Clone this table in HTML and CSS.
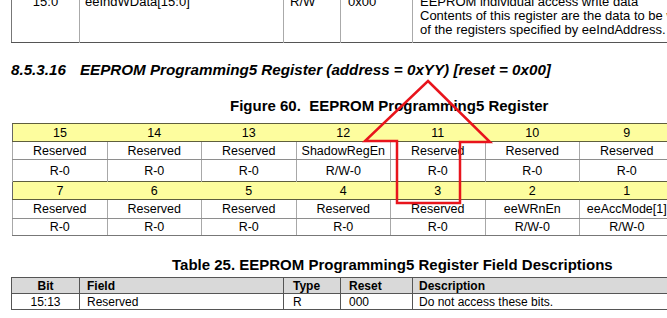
FILE: index.html
```html
<!DOCTYPE html>
<html>
<head>
<title>EEPROM Programming5 Register</title>
<link rel="stylesheet" href="styles.css">
</head>
<body>
<div class="page">
  <table class="prevTable">
    <tr>
      <td class="c1 center">15:0</td>
      <td class="c2">eeIndWData[15:0]</td>
      <td class="c3">R/W</td>
      <td class="c4">0x00</td>
      <td class="c5">EEPROM individual access write data<br>Contents of this register are the data to be written into one<br>of the registers specified by eeIndAddress.</td>
    </tr>
  </table>

  <h3 class="section"><span class="secNum">8.5.3.16</span>EEPROM Programming5 Register (address = 0xYY) [reset = 0x00]</h3>

  <div class="caption">Figure 60.&nbsp; EEPROM Programming5 Register</div>

  <table class="regTable">
    <tr class="bits">
      <td>15</td><td>14</td><td>13</td><td>12</td><td>11</td><td>10</td><td>9</td><td>8</td>
    </tr>
    <tr class="names rowA">
      <td>Reserved</td><td>Reserved</td><td>Reserved</td><td>ShadowRegEn</td><td>Reserved</td><td>Reserved</td><td>Reserved</td><td>Reserved</td>
    </tr>
    <tr class="access rowB">
      <td>R-0</td><td>R-0</td><td>R-0</td><td>R/W-0</td><td>R-0</td><td>R-0</td><td>R-0</td><td>R-0</td>
    </tr>
    <tr class="bits">
      <td>7</td><td>6</td><td>5</td><td>4</td><td>3</td><td>2</td><td>1</td><td>0</td>
    </tr>
    <tr class="names rowC">
      <td>Reserved</td><td>Reserved</td><td>Reserved</td><td>Reserved</td><td>Reserved</td><td>eeWRnEn</td><td>eeAccMode[1]</td><td>eeAccMode[0]</td>
    </tr>
    <tr class="access rowD">
      <td>R-0</td><td>R-0</td><td>R-0</td><td>R-0</td><td>R-0</td><td>R/W-0</td><td>R/W-0</td><td>R/W-0</td>
    </tr>
  </table>

  <div class="tableTitle">Table 25. EEPROM Programming5 Register Field Descriptions</div>

  <table class="fieldTable">
    <tr class="head">
      <td class="c1 center">Bit</td>
      <td class="c2">Field</td>
      <td class="c3">Type</td>
      <td class="c4">Reset</td>
      <td class="c5">Description</td>
    </tr>
    <tr>
      <td class="c1 center">15:13</td>
      <td class="c2">Reserved</td>
      <td class="c3">R</td>
      <td class="c4">000</td>
      <td class="c5">Do not access these bits.</td>
    </tr>
  </table>

  <!-- hand-drawn arrow marking bit 11 / bit 3 -->
  <svg class="arrow" width="667" height="318" viewBox="0 0 667 318">
    <polygon points="428,81 490,142 460,142 460,203 397,203 397,141 365,141" fill="none" stroke="#e8141c" stroke-width="2.5" stroke-linejoin="miter"/>
  </svg>
</div>
</body>
</html>
```

FILE: styles.css
```css
body {
  margin: 0;
  overflow: hidden;
  background-color: white;
  font-family: "Liberation Sans", Arial, sans-serif;
  color: black;
}

.page {
  position: relative;
  width: 667px;
  height: 318px;
  overflow: hidden;
}

table {
  border-collapse: collapse;
  table-layout: fixed;
}

td {
  box-sizing: border-box;
  padding: 0;
  white-space: nowrap;
}

.center {
  text-align: center;
}

.c1 { width: 68px; }
.c2 { width: 204px; }
.c3 { width: 57px; }
.c4 { width: 72px; }
.c5 { width: 399px; }

/* tail end of the previous register table */
.prevTable {
  margin-top: -7px;
  margin-left: 11px;
  width: 800px;
  font-size: 13px;
  line-height: 14px;
  border-left: 1px solid #777;
  border-bottom: 1px solid #555;
}

.prevTable td {
  vertical-align: top;
  padding-top: 2px;
  padding-bottom: 5px;
  border-right: 1px solid #aaa;
}

.prevTable .c2 { padding-left: 5px; }
.prevTable .c3 { padding-left: 6px; }
.prevTable .c4 { padding-left: 7px; }
.prevTable .c5 { padding-left: 7px; }

.section {
  margin: 18px 0 0 11px;
  font-size: 15.2px;
  font-weight: bold;
  font-style: italic;
  line-height: 18px;
}

.secNum {
  margin-right: 14px;
}

.caption {
  margin: 18px 0 0 230px;
  font-size: 15px;
  font-weight: bold;
  line-height: 17px;
}

/* bit layout grid */
.regTable {
  margin: 9px 0 0 12px;
  width: 756px;
  font-size: 12.5px;
  border-left: 1px solid #666;
}

.regTable td {
  width: 94.5px;
  text-align: center;
  line-height: 14px;
}

.regTable .bits td {
  background-color: #fdfd9e;
  height: 18px;
  border-top: 1px solid #5e5e3e;
  border-bottom: 1px solid #5e5e3e;
}

.regTable .names td,
.regTable .access td {
  border-left: 1px solid #a8a8a8;
}

.regTable .names td {
  border-bottom: 1px solid #8e8e8e;
}

.regTable .rowA td { height: 18px; }
.regTable .rowB td { height: 22px; }
.regTable .rowC td { height: 19px; }
.regTable .rowD td {
  height: 17px;
  border-bottom: 1px solid #777;
}

.tableTitle {
  margin: 20px 0 0 172px;
  font-size: 15px;
  font-weight: bold;
  line-height: 18px;
}

.fieldTable {
  margin: 3px 0 0 11px;
  width: 800px;
  font-size: 12px;
  border-left: 1px solid #555;
  border-top: 1px solid #555;
}

.fieldTable td {
  border-right: 1px solid #555;
  border-bottom: 1px solid #555;
  height: 16px;
  line-height: 14px;
}

.fieldTable .head td {
  background-color: #d9d9d9;
  font-weight: bold;
}

.fieldTable .c2 { padding-left: 7px; }
.fieldTable .c3 { padding-left: 9px; }
.fieldTable .c4 { padding-left: 8px; }
.fieldTable .c5 { padding-left: 6px; }

.arrow {
  position: absolute;
  left: 0;
  top: 0;
}
```
